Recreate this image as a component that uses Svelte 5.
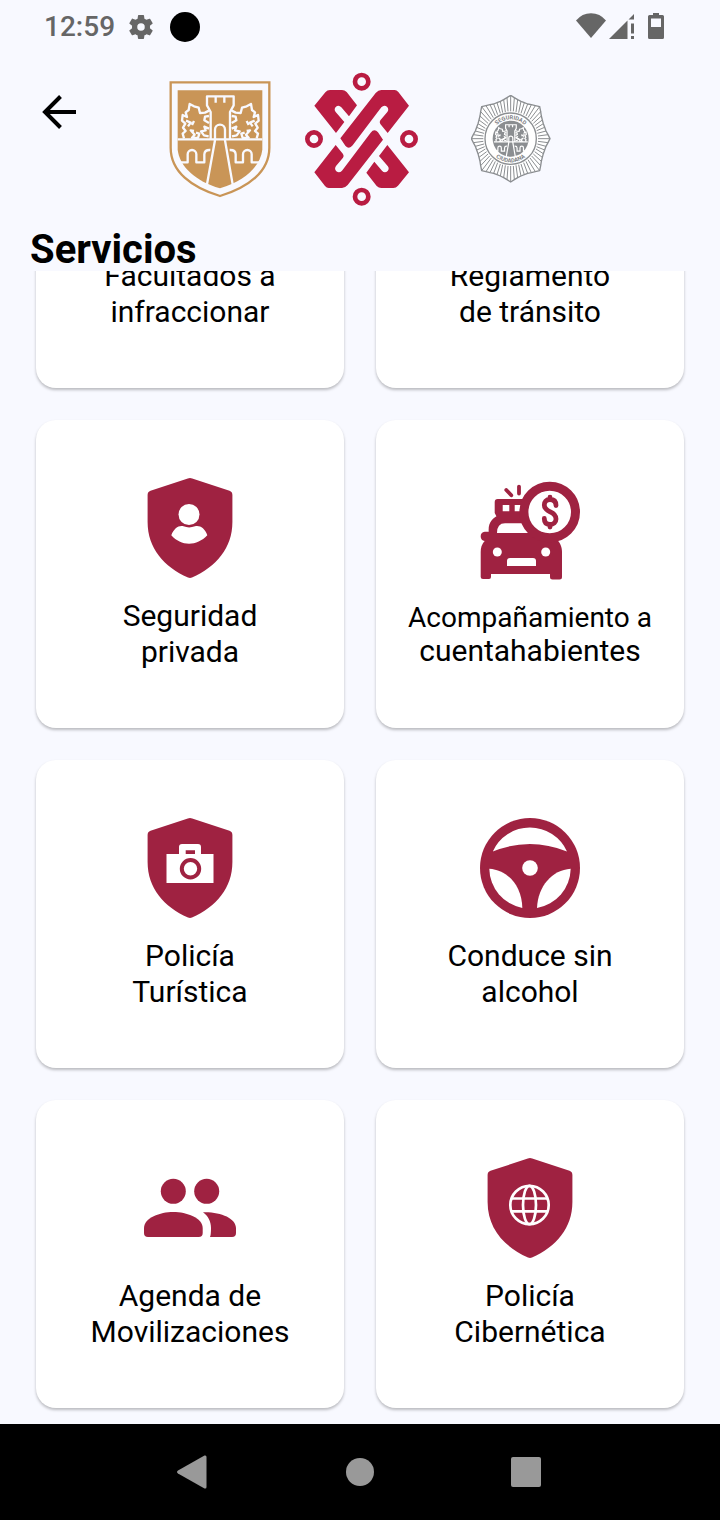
<script>
  import { onMount } from 'svelte';

  let list;

  const services = [
    { lines: ['Facultados a', 'infraccionar'], icon: 'person' },
    { lines: ['Reglamento', 'de tránsito'], icon: 'wheel' },
    { lines: ['Seguridad', 'privada'], icon: 'person' },
    { lines: ['Acompañamiento a', 'cuentahabientes'], icon: 'car', compact: true },
    { lines: ['Policía', 'Turística'], icon: 'camera' },
    { lines: ['Conduce sin', 'alcohol'], icon: 'wheel' },
    { lines: ['Agenda de', 'Movilizaciones'], icon: 'people' },
    { lines: ['Policía', 'Cibernética'], icon: 'globe' }
  ];

  const shield =
    'M47.8 .6Q50 -.4 52.2 .6L89.5 12.8Q92.4 13.8 92.4 17V44C92.4 70 76 89 52 99.5Q50 100.4 48 99.5C24 89 7.6 70 7.6 44V17Q7.6 13.8 10.5 12.8Z';

  const castle =
    'M54 207H308M153 205V125L142 105V78H222V105L211 125V205M168 78V97M194 78V97M166 205V178a15 15 0 0 1 30 0V205M166 210L142 342M196 210L219 342M56 276H84V252a13 13 0 0 1 26 0V276H134V252q1 -14 18 -13M308 276H276V252a13 13 0 0 0 -26 0V276H228V252q-1 -14 -18 -13';
  const lion =
    'M73 204L69 190L78 182L70 172L77 160L67 151L69 134L82 140L78 126L87 119L90 101L103 108L117 112L121 128L136 127L148 121M148 137L136 139L134 150L148 158M79 151L93 157L85 168M97 164L103 152M103 182L93 180L105 193L97 202L115 203L119 190L109 187M148 175L134 169L138 180L124 183L133 195L147 198';

  // Rays of the police star, drawn from the inner ring to the scalloped edge
  const edge = (deg) => {
    const a = (deg * Math.PI) / 180;
    const tip = Math.abs((deg % 45) / 22.5 - 1);
    const diagonal = Math.abs(Math.sin(2 * a));
    const k = 0.87 + 0.13 * tip * tip + 0.04 * diagonal;
    return [Math.round(150 + Math.cos(a) * 118 * k), Math.round(160 + Math.sin(a) * 130 * k)];
  };
  const star = Array.from({ length: 64 }, (_, i) => edge(i * 5.625).join(',')).join(' ');
  const rays = Array.from({ length: 64 }, (_, i) => {
    const deg = i * 5.625;
    const a = (deg * Math.PI) / 180;
    const [x, y] = edge(deg);
    return `M${Math.round(150 + Math.cos(a) * 82)} ${Math.round(160 + Math.sin(a) * 82)}L${x} ${y}`;
  }).join('');

  onMount(() => {
    list.scrollTop = list.scrollHeight;
  });
</script>

<div class="screen">
  <div class="status">
    <div class="group">
      <span class="time">12:59</span>
      <svg class="gear" width="30" height="30" viewBox="0 0 24 24" aria-hidden="true">
        <path fill="#666" d="M19.14 12.94c.04-.3.06-.61.06-.94 0-.32-.02-.64-.07-.94l2.03-1.58c.18-.14.23-.41.12-.61l-1.92-3.32c-.12-.22-.37-.29-.59-.22l-2.39.96c-.5-.38-1.03-.7-1.62-.94l-.36-2.54c-.04-.24-.24-.41-.48-.41h-3.84c-.24 0-.43.17-.47.41l-.36 2.54c-.59.24-1.13.57-1.62.94l-2.39-.96c-.22-.08-.47 0-.59.22L2.74 8.87c-.12.21-.08.47.12.61l2.03 1.58c-.05.3-.09.63-.09.94s.02.64.07.94l-2.03 1.58c-.18.14-.23.41-.12.61l1.92 3.32c.12.22.37.29.59.22l2.39-.96c.5.38 1.03.7 1.62.94l.36 2.54c.05.24.24.41.48.41h3.84c.24 0 .44-.17.47-.41l.36-2.54c.59-.24 1.13-.56 1.62-.94l2.39.96c.22.08.47 0 .59-.22l1.92-3.32c.12-.22.07-.47-.12-.61l-2.01-1.58zM12 15a3 3 0 1 1 0-6 3 3 0 0 1 0 6z" />
      </svg>
      <span class="dot"></span>
    </div>
    <svg width="90" height="28" viewBox="0 0 90 28" fill="#666" aria-hidden="true">
      <path d="M0 7.5Q6 .2 15 .2T30 7.5L15 25Z" />
      <path d="M33 26L51.500 7.500V26ZM52.500 6.500L58 1V6.500ZM55 10.500H58V20.500H55ZM55 23H58V26H55Z" />
      <path fill-rule="evenodd" d="M77 2V0H83V2H86.500Q88 2 88 3.500V24.500Q88 26 86.500 26H73.500Q72 26 72 24.500V3.500Q72 2 73.500 2ZM75 5.500V14H85V5.500Z" />
    </svg>
  </div>

  <header>
    <button class="back" aria-label="Atrás">
      <svg width="34" height="34" viewBox="0 0 34 34" fill="none" stroke="#000" stroke-width="4" aria-hidden="true">
        <path d="M34 17H4M18.500 1.500L3 17L18.500 32.500" />
      </svg>
    </button>
    <div class="logos">
      <svg width="102" height="117" viewBox="28 32 306 351" aria-hidden="true">
        <path d="M33 36H329V232C329 304 266 351 181 377C96 351 33 304 33 232Z" fill="#f8f9ff" stroke="#c99557" stroke-width="7" />
        <path d="M54 60H308V238C302 288 256 332 181 354C106 332 60 288 54 238Z" fill="#c99557" />
        <g fill="none" stroke="#f8f9ff" stroke-width="7" stroke-linejoin="round">
          <path d={castle} />
          <path d={lion} />
          <path d={lion} transform="translate(364 0) scale(-1 1)" />
        </g>
      </svg>
      <svg width="114" height="134" viewBox="31 21 342 402" fill="#b91c42" aria-hidden="true">
        {#each [0, 180] as turn}
          <g transform={`rotate(${turn} 201 222)`}>
            <path d="M59 122L92 82Q98 75 106 75H142Q150 75 156 81L187 121L163 154L140 127Q132 118 123 126Q117 133 123 141L149 171L124 204Z" />
            <path d="M137 220L243 84Q251 75 260 75H300Q306 75 311 81L343 122L279 204L257 177Q253 171 257 166L278 141Q284 132 277 125Q268 119 260 127L174 241Q163 255 152 242Z" />
          </g>
        {/each}
        <g fill="none" stroke="#b91c42" stroke-width="14">
          <circle cx="201" cy="50" r="20" />
          <circle cx="58" cy="222" r="20" />
          <circle cx="343" cy="222" r="20" />
          <circle cx="201" cy="395" r="20" />
        </g>
      </svg>
      <svg class="badge" width="80" height="88" viewBox="31 29 240 264" aria-hidden="true">
        <defs>
          <path id="arc-top" d="M92 160A58 58 0 0 1 208 160" />
          <path id="arc-bottom" d="M79 160A71 71 0 0 0 221 160" />
        </defs>
        <polygon points={star} fill="#fff" stroke="#8b8e91" stroke-width="4" stroke-linejoin="round" />
        <path d={rays} stroke="#8b8e91" stroke-width="3" />
        <circle cx="150" cy="160" r="77" fill="#fff" stroke="#8b8e91" stroke-width="4" />
        <circle cx="150" cy="160" r="54" fill="#8b8e91" />
        <g transform="translate(78 87) scale(.4)" fill="none" stroke="#fff" stroke-width="9">
          <path d={castle} />
          <path d={lion} />
          <path d={lion} transform="translate(364 0) scale(-1 1)" />
        </g>
        <g class="motto" fill="#7d8083" text-anchor="middle">
          <text><textPath href="#arc-top" startOffset="50%">SEGURIDAD</textPath></text>
          <text><textPath href="#arc-bottom" startOffset="50%">CIUDADANA</textPath></text>
        </g>
      </svg>
    </div>
  </header>

  <h1>Servicios</h1>

  <main bind:this={list}>
    <div class="grid">
      {#each services as service}
        <button class="card" class:compact={service.compact}>
          <svg class="icon" viewBox="0 0 100 100" fill="#9f2241" aria-hidden="true">
            {#if service.icon === 'person'}
              <path d={shield} />
              <g fill="#fff">
                <circle cx="49" cy="36.500" r="10.500" />
                <path d="M31.300 57.300C34 50 39 47 43.500 48.300Q49 50.500 55 48.300C59.500 47 65 50 67.300 57.300C57 68.500 41 68.500 31.300 57.300Z" />
              </g>
            {:else if service.icon === 'camera'}
              <path d={shield} />
              <path fill="#fff" fill-rule="evenodd" d="M26.500 36H39V29Q39 26 42 26H58Q61 26 61 29V36H73.500V65H26.500ZM45.700 32.300V36H55V32.300Z" />
              <circle cx="50.500" cy="50.700" r="8.700" fill="#fff" stroke="#9f2241" stroke-width="4" />
            {:else if service.icon === 'globe'}
              <path d={shield} />
              <g fill="none" stroke="#fff" stroke-width="2.700">
                <circle cx="49.500" cy="47" r="19.200" />
                <ellipse cx="49.500" cy="47" rx="6.500" ry="19.200" />
                <path d="M32 40.500H67M32 53.300H67" />
              </g>
            {:else if service.icon === 'wheel'}
              <circle cx="50" cy="50" r="50" />
              <g fill="#fff">
                <circle cx="50" cy="50" r="7.800" />
                <path d="M12.800 33.500A40.700 40.700 0 0 1 87 33.500Q50 18.500 12.800 33.500Z" />
                <path d="M9.300 50.700A40.700 40.700 0 0 0 42.300 90C42 68 28 52 9.300 50.700Z" />
                <path d="M90.700 50.700A40.700 40.700 0 0 1 57 90C58 68 72 52 90.700 50.700Z" />
              </g>
            {:else if service.icon === 'people'}
              <circle cx="33.300" cy="33.300" r="12.500" />
              <circle cx="66.700" cy="33.300" r="12.500" />
              <path d="M4 70C4 60 20 54 33.300 54S62.700 60 62.700 70V75a4 4 0 0 1-4 4H8a4 4 0 0 1-4-4Z" />
              <path d="M63 54.200C80 53.500 96 60 96 70V75a4 4 0 0 1-4 4H70Q71 77 71 70C71 63 68 58 63 54.200Z" />
            {:else}
              <g stroke="#9f2241" stroke-width="3.800" stroke-linecap="round">
                <path d="M26.300 9L31.300 14.300M39 5.600V12.600" />
              </g>
              <path fill-rule="evenodd" d="M17.700 18H46V36H18Q15.700 35 14.700 32V21Q14.700 18 17.700 18ZM22.700 24V30.300H29.300V24ZM34.700 24V30.300H41.300V24Z" />
              <path d="M16.700 35H50L76 58C80 61 82 66 82 71V96Q82 98.500 79.500 98.500H72.500Q70 98.500 70 96V93H11V96Q11 98 9 98H3Q.7 98 .7 96V71Q.7 64 4.700 60A4.700 4.700 0 0 1 4.700 50.700H8.700C8 41 13 37.500 16.700 35Z" />
              <path fill="#fff" d="M17 52Q17 42.300 25 42.300H46L54 52Z" />
              <circle cx="69.700" cy="31" r="25.800" fill="#fff" stroke="#9f2241" stroke-width="9" />
              <g fill="#fff">
                <circle cx="17.300" cy="71" r="4.500" />
                <circle cx="65.700" cy="71" r="4.500" />
                <path d="M27 85V80Q27 77 30 77H53Q56 77 56 80V85Z" />
              </g>
              <g fill="none" stroke="#9f2241" stroke-width="4.800" stroke-linecap="round">
                <path d="M76 24.500C76 20 73.500 18.500 70 18.500C66 18.500 64.300 21 64.300 24C64.300 28 67.500 29.500 70 30.800C73.500 32.300 76 34 76 38C76 41.500 73.500 43.500 70 43.500C66.500 43.500 64.300 41.500 64.300 37.500M70 16.200V18M70 44V46" />
              </g>
            {/if}
          </svg>
          <span class="label">
            {#each service.lines as line}
              <span>{line}</span>
            {/each}
          </span>
        </button>
      {/each}
    </div>
  </main>

  <nav>
    <button aria-label="Volver">
      <svg width="34" height="34" viewBox="0 0 34 34" aria-hidden="true"><path fill="#999" d="M1 15.500L27.500 .6Q29.500 0 29.500 2V32Q29.500 34 27.500 33.400L1 18.500Q-1 17 1 15.500Z" /></svg>
    </button>
    <button aria-label="Inicio">
      <svg width="34" height="34" viewBox="0 0 34 34" aria-hidden="true"><circle cx="17" cy="17" r="14" fill="#999" /></svg>
    </button>
    <button aria-label="Recientes">
      <svg width="34" height="34" viewBox="0 0 34 34" aria-hidden="true"><rect x="2" y="2" width="30" height="30" rx="2" fill="#999" /></svg>
    </button>
  </nav>
</div>

<style>
  .screen {
    display: flex;
    flex-direction: column;
    height: 100vh;
    background: #f8f9ff;
    color: #000;
    font-family: Roboto, "Liberation Sans", sans-serif;
  }

  button {
    padding: 0;
    border: 0;
    background: none;
    color: inherit;
    font: inherit;
    cursor: pointer;
  }

  svg {
    display: block;
    flex: none;
  }

  .status {
    display: flex;
    flex: none;
    align-items: center;
    justify-content: space-between;
    height: 54px;
    padding: 0 54px 0 44px;
  }

  .group {
    display: flex;
    align-items: center;
  }

  .time {
    color: #666;
    font-size: 28px;
    font-weight: 500;
    line-height: 32px;
  }

  .gear {
    margin: 0 14px 0 11px;
  }

  .dot {
    width: 30px;
    height: 30px;
    border-radius: 50%;
    background: #000;
  }

  header {
    display: grid;
    flex: none;
    grid-template-columns: 1fr auto 1fr;
    padding: 18px 42px 0;
  }

  .back {
    justify-self: start;
    align-self: start;
    margin-top: 23px;
  }

  .logos {
    display: flex;
    align-items: center;
    gap: 34px;
  }

  .badge {
    margin-left: 18px;
  }

  .motto {
    font-size: 17px;
    font-weight: 700;
  }

  h1 {
    flex: none;
    margin: 0;
    padding: 23px 30px 0;
    font-size: 40px;
    font-weight: 700;
    line-height: 42px;
  }

  main {
    flex: 1;
    min-height: 0;
    overflow-y: auto;
    scrollbar-width: none;
  }

  .grid {
    display: grid;
    grid-template-columns: 1fr 1fr;
    gap: 32px;
    padding: 0 36px 16px;
  }

  .card {
    display: flex;
    flex-direction: column;
    align-items: center;
    justify-content: center;
    gap: 20px;
    aspect-ratio: 1;
    border-radius: 20px;
    background: #fff;
    box-shadow: 0 2px 3px rgba(0, 0, 0, 0.25);
  }

  .icon {
    width: 100px;
    height: 100px;
  }

  .label {
    display: flex;
    flex-direction: column;
    align-items: center;
    font-size: 30px;
    line-height: 36px;
  }

  .compact .label {
    line-height: 33px;
  }

  .compact .label span:first-child {
    font-size: 28px;
  }

  nav {
    display: flex;
    flex: none;
    align-items: center;
    justify-content: center;
    gap: 132px;
    height: 96px;
    background: #000;
  }
</style>
